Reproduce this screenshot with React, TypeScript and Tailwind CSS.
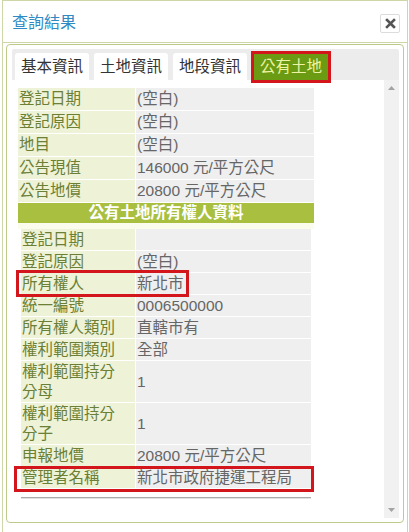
import React from "react";

type Row = { label: string[]; value: string };

const landRows: Row[] = [
  { label: ["登記日期"], value: "(空白)" },
  { label: ["登記原因"], value: "(空白)" },
  { label: ["地目"], value: "(空白)" },
  { label: ["公告現值"], value: "146000 元/平方公尺" },
  { label: ["公告地價"], value: "20800 元/平方公尺" },
];

const ownerRows: Row[] = [
  { label: ["登記日期"], value: "" },
  { label: ["登記原因"], value: "(空白)" },
  { label: ["所有權人"], value: "新北市" },
  { label: ["統一編號"], value: "0006500000" },
  { label: ["所有權人類別"], value: "直轄市有" },
  { label: ["權利範圍類別"], value: "全部" },
  { label: ["權利範圍持分", "分母"], value: "1" },
  { label: ["權利範圍持分", "分子"], value: "1" },
  { label: ["申報地價"], value: "20800 元/平方公尺" },
  { label: ["管理者名稱"], value: "新北市政府捷運工程局" },
];

const tabs = ["基本資訊", "土地資訊", "地段資訊"];

function CloseIcon() {
  return (
    <svg width="11" height="11" viewBox="0 0 11 11">
      <path d="M2 2 L9 9 M9 2 L2 9" stroke="#555" strokeWidth="2.6" strokeLinecap="square" />
    </svg>
  );
}

export default function App() {
  return (
    <div
      className="w-[409px] h-[532px] overflow-hidden bg-white"
      style={{ fontFamily: '"Liberation Sans", "Noto Sans CJK TC", sans-serif' }}
    >
      <div className="ml-[2px] w-[406px] h-[560px] border border-[#cdd6a6] bg-white">
        {/* header */}
        <div className="h-[42px] flex items-center justify-between pl-[9px] pr-[7px] border-b border-[#cdd6a6]">
          <span className="text-[16px] text-[#2f8ac4] mt-[2px]">查詢結果</span>
          <button className="w-[20px] h-[19px] mt-[3px] flex items-center justify-center bg-white border border-[#dcdcdc] rounded-[2px]">
            <CloseIcon />
          </button>
        </div>

        {/* panel */}
        <div className="mx-[3px] mt-[1px] h-[479px] border border-[#bccb8c] rounded-[4px] pl-[5px] pr-[4px] pt-[4px] flex flex-col">
          {/* tab bar */}
          <div className="h-[31px] bg-[#ececec] rounded-t-[2px] flex items-end gap-[5px] pl-[3px]">
            {tabs.map((t) => (
              <div
                key={t}
                className="w-[74px] h-[27px] bg-white rounded-t-[3px] flex items-center justify-center text-[15.5px] text-[#333]"
              >
                {t}
              </div>
            ))}
            <div className="ml-[2px] w-[74px] h-[26px] bg-[#6b9b12] outline-[3px] outline-solid outline-[#d2161c] flex items-center justify-center text-[15.5px] text-[#eef4a6]">
              公有土地
            </div>
          </div>

          {/* content */}
          <div className="flex flex-1 pb-[4px]">
            <div className="flex-1 pl-[6px] pt-[8px]">
              <div className="w-[296px]">
                {landRows.map((r) => (
                  <div key={r.label[0]} className="flex h-[23px] border-b border-white">
                    <div className="w-[117px] bg-[#eef2d7] text-[#6b7f35] text-[15.5px] pl-[1px] flex items-center leading-none">
                      {r.label[0]}
                    </div>
                    <div className="flex-1 bg-[#efefef] border-l border-white text-[#666] text-[15.5px] pl-[1px] flex items-center leading-none">
                      {r.value}
                    </div>
                  </div>
                ))}
                <div className="h-[20px] bg-[#a8bf3f] text-white text-[15.5px] font-bold flex items-center justify-center leading-none">
                  公有土地所有權人資料
                </div>
                <div className="h-[6px] bg-[#fbfcec]" />
              </div>

              <div className="relative ml-[3px] w-[290px]">
                {ownerRows.map((r) => (
                  <div
                    key={r.label.join("")}
                    className={`flex border-b border-white ${r.label.length > 1 ? "h-[42px]" : "h-[22px]"}`}
                  >
                    <div className="w-[114px] bg-[#eef2d7] text-[#6b7f35] text-[15.5px] pl-[1px] flex flex-col justify-center leading-[20px]">
                      {r.label.map((l) => (
                        <span key={l}>{l}</span>
                      ))}
                    </div>
                    <div className="flex-1 bg-[#efefef] border-l border-white text-[#666] text-[15.5px] pl-[1px] flex items-center leading-none">
                      {r.value}
                    </div>
                  </div>
                ))}
                <div className="absolute left-[-5px] top-[41px] w-[173px] h-[27px] border-[3px] border-[#d2161c]" />
                <div className="absolute left-[-7px] top-[237px] w-[300px] h-[26px] border-[3px] border-[#d2161c]" />
                <div className="mt-[8px] border-t border-[#aaa] h-[2px] bg-[#e2e2e2]" />
              </div>
            </div>

            {/* scrollbar */}
            <div className="w-[15px] bg-[#f1f1f1] flex flex-col items-center justify-between py-[6px]">
              <svg width="7" height="4" viewBox="0 0 7 4">
                <path d="M0 4 L3.5 0 L7 4 Z" fill="#a3a3a3" />
              </svg>
              <svg width="7" height="4" viewBox="0 0 7 4">
                <path d="M0 0 L3.5 4 L7 0 Z" fill="#a3a3a3" />
              </svg>
            </div>
          </div>
        </div>
      </div>
    </div>
  );
}
